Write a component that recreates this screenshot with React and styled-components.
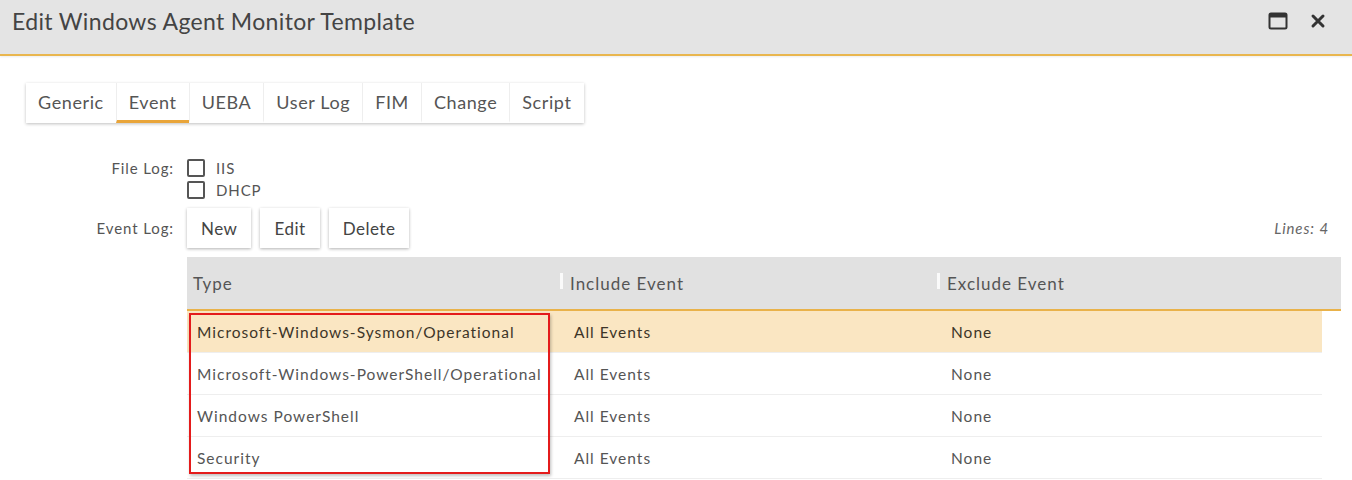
import styled, { createGlobalStyle } from "styled-components";

const GlobalStyle = createGlobalStyle`
    body {
        margin: 0;
        background: #fff;
        font-family: Lato, "Open Sans", sans-serif;
        color: #444;
    }
`;

const tabs = ["Generic", "Event", "UEBA", "User Log", "FIM", "Change", "Script"];

const rows = [
    { type: "Microsoft-Windows-Sysmon/Operational", include: "All Events", exclude: "None" },
    { type: "Microsoft-Windows-PowerShell/Operational", include: "All Events", exclude: "None" },
    { type: "Windows PowerShell", include: "All Events", exclude: "None" },
    { type: "Security", include: "All Events", exclude: "None" },
];

export default function App() {
    return (
        <Window>
            <GlobalStyle />
            <TitleBar>
                <Title>Edit Windows Agent Monitor Template</Title>
                <TitleIcons>
                    <svg width="20" height="18" viewBox="0 0 20 18">
                        <rect x="1.5" y="1.5" width="17" height="15" rx="1.5" fill="none" stroke="#333" strokeWidth="2" />
                        <rect x="1.5" y="1.5" width="17" height="4" fill="#333" />
                    </svg>
                    <svg width="16" height="16" viewBox="0 0 16 16">
                        <path d="M3 3 L13 13 M13 3 L3 13" stroke="#333" strokeWidth="3" strokeLinecap="round" />
                    </svg>
                </TitleIcons>
            </TitleBar>

            <Body>
                <Tabs>
                    {tabs.map((t) => (
                        <Tab key={t} active={t === "Event"}>{t}</Tab>
                    ))}
                </Tabs>

                <Form>
                    <Label>File Log:</Label>
                    <Checks>
                        <CheckRow><Box />IIS</CheckRow>
                        <CheckRow><Box />DHCP</CheckRow>
                    </Checks>

                    <Label centered>Event Log:</Label>
                    <Toolbar>
                        <Button>New</Button>
                        <Button>Edit</Button>
                        <Button>Delete</Button>
                        <Lines>Lines: 4</Lines>
                    </Toolbar>

                    <span />
                    <Table>
                        <HeadRow>
                            <HeadCell>Type</HeadCell>
                            <HeadCell divider>Include Event</HeadCell>
                            <HeadCell divider>Exclude Event</HeadCell>
                        </HeadRow>
                        {rows.map((r, i) => (
                            <Row key={r.type} selected={i === 0}>
                                <Cell>{r.type}</Cell>
                                <Cell inset>{r.include}</Cell>
                                <Cell inset>{r.exclude}</Cell>
                            </Row>
                        ))}
                        <Highlight />
                    </Table>
                </Form>
            </Body>
        </Window>
    );
}

const Window = styled.div`
    width: 1352px;
    height: 480px;
    overflow: hidden;
`;

const TitleBar = styled.div`
    height: 54px;
    background: #e4e4e4;
    border-bottom: 2px solid #e9b64e;
    display: flex;
    align-items: center;
    justify-content: space-between;
    padding: 0 26px 0 12px;
    box-shadow: 0 1px 2px rgba(0, 0, 0, 0.08);
`;

const Title = styled.div`
    font-size: 23px;
    letter-spacing: 0.35px;
    color: #444;
    margin-top: -12px;
`;

const TitleIcons = styled.div`
    display: flex;
    align-items: center;
    gap: 22px;
    margin-top: -12px;
`;

const Body = styled.div`
    padding: 27px 0 0 26px;
`;

const Tabs = styled.div`
    display: inline-flex;
    height: 40px;
    background: #fff;
    box-shadow: 0 1px 3px rgba(0, 0, 0, 0.25);
`;

const Tab = styled.div`
    display: flex;
    align-items: center;
    padding: 0 12px;
    padding-top: 1px;
    font-size: 18px;
    letter-spacing: 0.6px;
    color: #555;
    border-left: 1px solid #eee;
    border-bottom: 3px solid ${(p) => (p.active ? "#e9a53a" : "transparent")};
    &:first-child {
        border-left: none;
    }
`;

const Form = styled.div`
    display: grid;
    grid-template-columns: 148px 1154px;
    column-gap: 13px;
    margin-top: 36px;
`;

const Label = styled.div`
    text-align: right;
    font-size: 15px;
    letter-spacing: 0.9px;
    color: #555;
    line-height: 18px;
    align-self: ${(p) => (p.centered ? "center" : "start")};
    margin-top: ${(p) => (p.centered ? "9px" : "0")};
`;

const Checks = styled.div`
    display: flex;
    flex-direction: column;
    gap: 4px;
`;

const CheckRow = styled.div`
    display: flex;
    align-items: center;
    gap: 11px;
    font-size: 15px;
    letter-spacing: 0.9px;
    color: #555;
    line-height: 18px;
`;

const Box = styled.span`
    width: 14px;
    height: 14px;
    border: 2px solid #555;
    border-radius: 2px;
`;

const Toolbar = styled.div`
    display: flex;
    align-items: center;
    gap: 9px;
    margin-top: 9px;
`;

const Button = styled.div`
    height: 40px;
    display: flex;
    align-items: center;
    padding: 0 14px;
    font-size: 17px;
    letter-spacing: 0.5px;
    color: #444;
    background: #fff;
    box-shadow: 0 1px 3px rgba(0, 0, 0, 0.3);
`;

const Lines = styled.div`
    margin-left: auto;
    margin-right: 12px;
    font-style: italic;
    font-size: 15px;
    letter-spacing: 0.9px;
    color: #666;
`;

const Table = styled.div`
    position: relative;
    margin-top: 9px;
    width: 1154px;
`;

const HeadRow = styled.div`
    display: grid;
    grid-template-columns: 373px 377px 1fr;
    height: 52px;
    background: #e1e1e1;
    border-bottom: 2px solid #e9b24a;
`;

const HeadCell = styled.div`
    position: relative;
    display: flex;
    align-items: center;
    padding-left: ${(p) => (p.divider ? "10px" : "6px")};
    font-size: 17px;
    letter-spacing: 1px;
    color: #555;

    &::before {
        content: "";
        display: ${(p) => (p.divider ? "block" : "none")};
        position: absolute;
        left: 0;
        top: 16px;
        width: 3px;
        height: 16px;
        background: #fafafa;
    }
`;

const Row = styled.div`
    display: grid;
    grid-template-columns: 373px 377px 1fr;
    width: 1135px;
    height: 41px;
    border-bottom: 1px solid #eee;
    background: ${(p) => (p.selected ? "#fae6c2" : "#fff")};
    color: ${(p) => (p.selected ? "#3d3528" : "#555")};
`;

const Cell = styled.div`
    display: flex;
    align-items: center;
    padding-left: ${(p) => (p.inset ? "14px" : "10px")};
    font-size: 15.5px;
    letter-spacing: 1px;
    white-space: nowrap;
`;

const Highlight = styled.div`
    position: absolute;
    left: 2px;
    top: 56px;
    width: 357px;
    height: 157px;
    border: 2px solid #e41b1b;
    box-shadow: 1px 2px 3px rgba(0, 0, 0, 0.25);
    pointer-events: none;
`;
